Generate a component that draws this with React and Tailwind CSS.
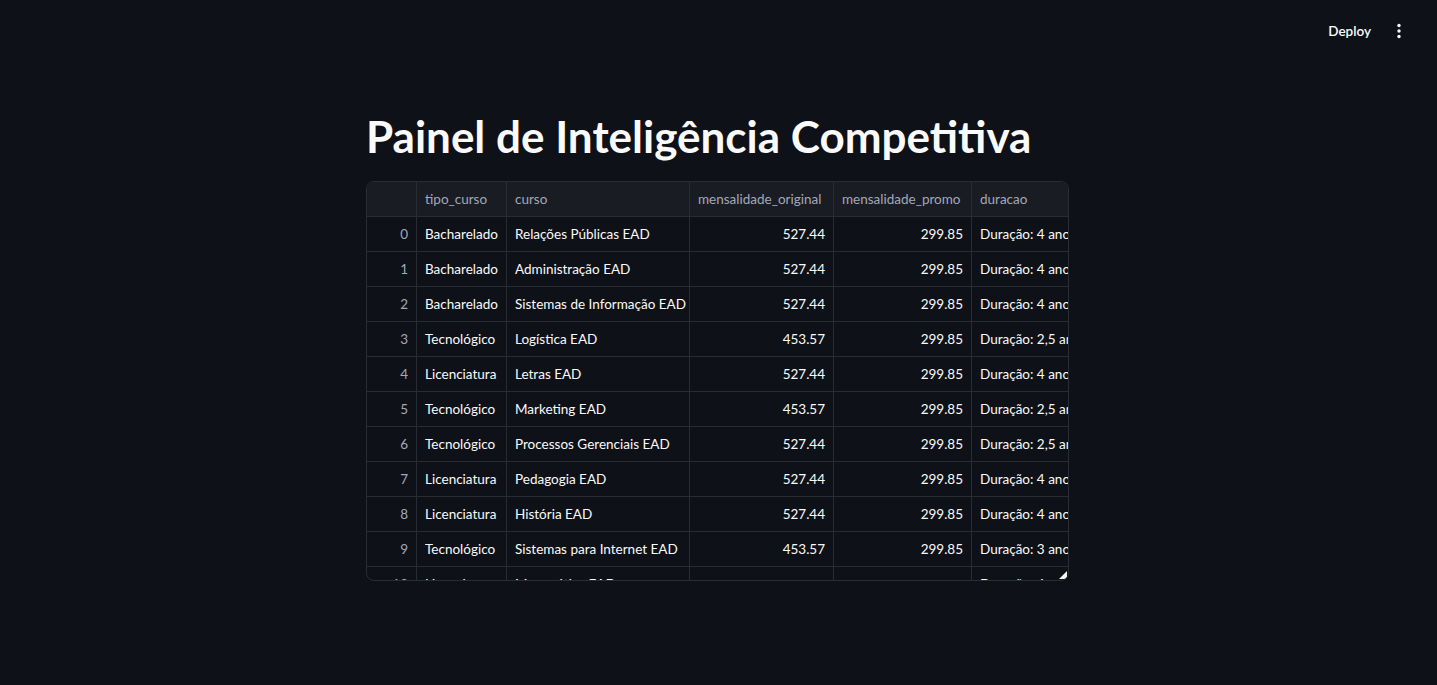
import React from "react";

const rows = [
  ["0", "Bacharelado", "Relações Públicas EAD", "527.44", "299.85", "Duração: 4 anos"],
  ["1", "Bacharelado", "Administração EAD", "527.44", "299.85", "Duração: 4 anos"],
  ["2", "Bacharelado", "Sistemas de Informação EAD", "527.44", "299.85", "Duração: 4 anos"],
  ["3", "Tecnológico", "Logística EAD", "453.57", "299.85", "Duração: 2,5 anos"],
  ["4", "Licenciatura", "Letras EAD", "527.44", "299.85", "Duração: 4 anos"],
  ["5", "Tecnológico", "Marketing EAD", "453.57", "299.85", "Duração: 2,5 anos"],
  ["6", "Tecnológico", "Processos Gerenciais EAD", "527.44", "299.85", "Duração: 2,5 anos"],
  ["7", "Licenciatura", "Pedagogia EAD", "527.44", "299.85", "Duração: 4 anos"],
  ["8", "Licenciatura", "História EAD", "527.44", "299.85", "Duração: 4 anos"],
  ["9", "Tecnológico", "Sistemas para Internet EAD", "453.57", "299.85", "Duração: 3 anos"],
  ["10", "Licenciatura", "Matemática EAD", "", "", "Duração: 4 anos"],
];

const widths = ["w-[50px]", "w-[90px]", "w-[183px]", "w-[144px]", "w-[138px]", "w-[130px]"];
const headers = ["", "tipo_curso", "curso", "mensalidade_original", "mensalidade_promo", "duracao"];

export default function App() {
  return (
    <div className="min-h-[685px] bg-[#0e1117] text-[#fafafa] font-['Lato','Noto_Sans',sans-serif]">
      <header className="h-[62px] flex items-center justify-end pr-[28px]">
        <span className="text-[13.5px] font-semibold text-[#fafafa] mr-[18px]">Deploy</span>
        <svg width="20" height="20" viewBox="0 0 20 20" className="text-[#fafafa]">
          <circle cx="10" cy="4.5" r="1.7" fill="currentColor" />
          <circle cx="10" cy="10" r="1.7" fill="currentColor" />
          <circle cx="10" cy="15.5" r="1.7" fill="currentColor" />
        </svg>
      </header>
      <main className="w-[705px] mx-auto">
        <h1 className="mt-[48px] text-[44px] font-bold leading-[52px] text-[#fafafa]">
          Painel de Inteligência Competitiva
        </h1>
        <div className="mt-[19px] relative w-[703px] h-[400px] overflow-hidden rounded-[8px] border border-[#2a2c34]">
          <div className="flex h-[35px] bg-[#1a1c24] border-b border-[#2a2c34] w-max">
            {headers.map((h, i) => (
              <div
                key={i}
                className={`${widths[i]} shrink-0 h-full flex items-center px-[8px] text-[13.5px] text-[#a3a8b8] border-r border-[#2a2c34]`}
              >
                {h}
              </div>
            ))}
          </div>
          {rows.map((r) => (
            <div key={r[0]} className="flex h-[35px] border-b border-[#2a2c34] w-max">
              {r.map((c, i) => (
                <div
                  key={i}
                  className={`${widths[i]} shrink-0 h-full flex items-center px-[8px] text-[13.5px] border-r border-[#2a2c34] whitespace-nowrap ${
                    i === 0
                      ? "justify-end text-[#a3a8b8]"
                      : i === 3 || i === 4
                      ? "justify-end text-[#fafafa]"
                      : "text-[#fafafa]"
                  }`}
                >
                  {c}
                </div>
              ))}
            </div>
          ))}
          <div className="absolute right-[1px] bottom-[1px] w-0 h-0 border-l-[8px] border-l-transparent border-b-[8px] border-b-[#fafafa]" />
        </div>
      </main>
    </div>
  );
}
